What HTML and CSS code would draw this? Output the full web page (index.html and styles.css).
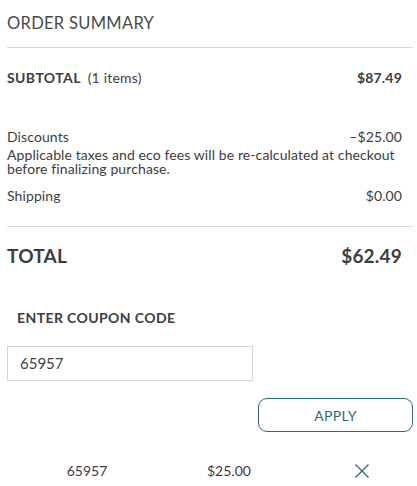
FILE: index.html
```html
<!DOCTYPE html>
<html>
<head>
<meta charset="utf-8">
<link rel="stylesheet" href="styles.css">
</head>
<body>
<div class="summary">
  <h2 class="title">ORDER SUMMARY</h2>
  <div class="row subtotal">
    <span><b>SUBTOTAL</b> <span class="count">(1 items)</span></span>
    <span class="amt-bold">$87.49</span>
  </div>
  <div class="details">
    <div class="row"><span>Discounts</span><span>–$25.00</span></div>
    <p class="note">Applicable taxes and eco fees will be re-calculated at checkout before finalizing purchase.</p>
    <div class="row ship"><span>Shipping</span><span>$0.00</span></div>
  </div>
  <div class="row total"><span>TOTAL</span><span>$62.49</span></div>
  <div class="coupon">
    <div class="coupon-label">ENTER COUPON CODE</div>
    <div class="input">65957</div>
    <div class="apply-wrap"><button class="apply">APPLY</button></div>
    <div class="applied">
      <span class="code">65957</span>
      <span class="val">$25.00</span>
      <span class="remove"><svg width="16" height="16" viewBox="0 0 16 16"><path d="M1.5 1.5L14.5 14.5M14.5 1.5L1.5 14.5" stroke="#2f6d72" stroke-width="1.4" fill="none"/></svg></span>
    </div>
  </div>
</div>
</body>
</html>
```
FILE: styles.css
```css
* { box-sizing: border-box; }
body {
  margin: 0;
  background: #fff;
  font-family: Lato, "Open Sans", sans-serif;
  color: #3d3d3d;
}
.summary {
  padding: 0 4px 0 7px;
}
.title {
  margin: 0;
  height: 48px;
  padding-top: 13px;
  font-size: 16.5px;
  font-weight: 400;
  letter-spacing: 0.3px;
  color: #4a4a4a;
  border-bottom: 1px solid #d9d9d9;
  line-height: 20px;
}
.row {
  display: flex;
  justify-content: space-between;
  padding-right: 11px;
}
.subtotal {
  margin-top: 21px;
  font-size: 14px;
  line-height: 18px;
  letter-spacing: 0.2px;
}
.subtotal b { font-weight: 700; letter-spacing: 0.4px; }
.count { margin-left: 3px; }
.amt-bold { font-weight: 700; }
.details {
  margin-top: 43px;
  font-size: 14px;
  line-height: 14.5px;
  letter-spacing: 0.1px;
  padding-bottom: 23px;
  border-bottom: 1px solid #d9d9d9;
}
.note { margin: 3px 0 0; padding-right: 8px; }
.ship { margin-top: 12px; }
.total {
  margin-top: 17px;
  font-size: 19px;
  font-weight: 700;
  line-height: 24px;
  letter-spacing: 0.2px;
}
.coupon-label {
  margin-top: 41px;
  padding-left: 10px;
  font-size: 14px;
  font-weight: 700;
  line-height: 18px;
  letter-spacing: 0.4px;
}
.input {
  margin-top: 19px;
  width: 246px;
  height: 35px;
  border: 1px solid #d4d4d4;
  padding: 0 12px;
  font-size: 15px;
  line-height: 33px;
  color: #444;
}
.apply-wrap {
  display: flex;
  justify-content: flex-end;
  margin-top: 17px;
}
.apply {
  width: 155px;
  height: 34px;
  border: 1.5px solid #2f6d72;
  border-radius: 9px;
  background: #fff;
  color: #2f6d72;
  font-family: inherit;
  font-size: 14px;
  letter-spacing: 0.3px;
}
.applied {
  display: grid;
  grid-template-columns: 160px 135px 80px;
  margin-top: 29px;
  font-size: 14px;
  line-height: 20px;
  align-items: center;
}
.code { text-align: center; }
.val { text-align: left; padding-left: 40px; }
.remove { display: flex; justify-content: center; padding-left: 40px; }
.remove svg { display: block; }
```
